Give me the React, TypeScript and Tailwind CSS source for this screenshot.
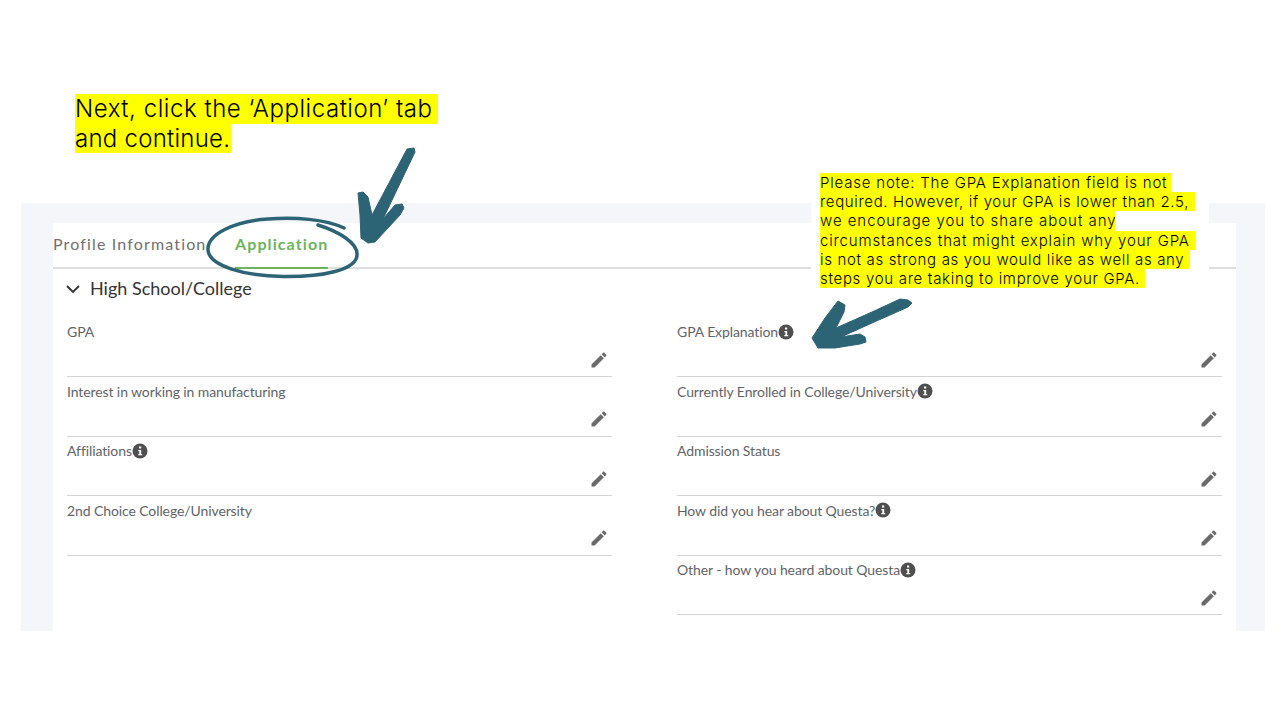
const noteLines = [
  { text: 'Please note: The GPA Explanation field is not', cls: 'w-[351px] tracking-[0.8px]' },
  { text: 'required. However, if your GPA is lower than 2.5,', cls: 'w-[375px] tracking-[0.66px]' },
  { text: 'we encourage you to share about any', cls: 'w-[295px] tracking-[0.95px]' },
  { text: 'circumstances that might explain why your GPA', cls: 'w-[376px] tracking-[0.86px]' },
  { text: 'is not as strong as you would like as well as any', cls: 'w-[370px] tracking-[0.66px]' },
  { text: 'steps you are taking to improve your GPA.', cls: 'w-[325px] tracking-[0.7px]' },
]

const leftFields = [
  { label: 'GPA' },
  { label: 'Interest in working in manufacturing' },
  { label: 'Affiliations', info: true },
  { label: '2nd Choice College/University' },
]

const rightFields = [
  { label: 'GPA Explanation', info: true },
  { label: 'Currently Enrolled in College/University', info: true },
  { label: 'Admission Status' },
  { label: 'How did you hear about Questa?', info: true },
  { label: 'Other - how you heard about Questa', info: true },
]

function InfoIcon() {
  return (
    <svg width="16" height="16" viewBox="0 0 16 16" className="shrink-0">
      <circle cx="8" cy="8" r="7.5" fill="#4f4f4f" />
      <rect x="7" y="3.5" width="2.2" height="2" fill="#fff" />
      <path d="M6.3 7h2.9v4h1v1.3H6.3V11h1V8.3h-1z" fill="#fff" />
    </svg>
  )
}

function PencilIcon() {
  return (
    <svg width="20" height="20" viewBox="0 0 24 24" fill="#6a6a6a">
      <path d="M3 17.25V21h3.75L17.81 9.94l-3.75-3.75L3 17.25zM20.71 7.04c.39-.39.39-1.02 0-1.41l-2.34-2.34c-.39-.39-1.02-.39-1.41 0l-1.83 1.83 3.75 3.75 1.83-1.83z" />
    </svg>
  )
}

function Field({ label, info }: { label: string; info?: boolean }) {
  return (
    <div className="h-[59.5px] border-b-[1.5px] border-[#d4d4d4] flex flex-col">
      <div className="flex items-center h-[16px] mt-[6px] text-[14px] tracking-[-0.1px] text-[#5f6368]">
        <span>{label}</span>
        {info && <InfoIcon />}
      </div>
      <div className="flex justify-end pr-[3px] mt-[10px]">
        <PencilIcon />
      </div>
    </div>
  )
}

export default function App() {
  return (
    <div className="relative h-[720px] overflow-hidden bg-white pt-[203px] pl-[21px] font-['Lato',sans-serif]">
      {/* Page behind the annotations */}
      <div className="w-[1244px] h-[428px] bg-[#f4f6fa] pl-[32px] pr-[29px] pt-[20px]">
        <div className="h-full bg-white">
          <div className="flex h-[45.5px] border-b-2 border-[#dedede]">
            <div className="w-[152px] pt-[11px] text-[16px] tracking-[1.15px] text-[#6f6f6f] leading-[20px] whitespace-nowrap">
              Profile Information
            </div>
            <div className="ml-[30px] pt-[11px] text-[16px] font-bold tracking-[1.1px] text-[#6cb35c] leading-[20px] h-[45.5px] border-b-2 border-[#6cb35c]">
              Application
            </div>
          </div>
          <div className="flex items-center h-[40px] pl-[12px] gap-[9px] text-[18px] text-[#333]">
            <svg width="16" height="16" viewBox="0 0 16 16" fill="none" stroke="#333" strokeWidth="1.8">
              <path d="M2 5l6 6 6-6" />
            </svg>
            <span>High School/College</span>
          </div>
          <div className="grid grid-cols-2 gap-x-[65px] px-[14px] pt-[9px]">
            <div>
              {leftFields.map((f) => (
                <Field key={f.label} {...f} />
              ))}
            </div>
            <div>
              {rightFields.map((f) => (
                <Field key={f.label} {...f} />
              ))}
            </div>
          </div>
        </div>
      </div>

      {/* Annotations */}
      <div className="absolute left-[75px] top-[94px] font-['Inter',sans-serif] font-light text-[24px] leading-[29px] text-black whitespace-nowrap">
        <div className="bg-[#ffff00] w-[363px] h-[29.5px] tracking-[0.55px]">Next, click the ‘Application’ tab</div>
        <div className="bg-[#ffff00] w-[156px] tracking-[0.25px]">and continue.</div>
      </div>

      <div className="absolute left-[811px] top-[170px] w-[398px] h-[100px] bg-white" />
      <div className="absolute left-[820px] top-[173px] font-['Inter',sans-serif] font-light text-[15px] leading-[19.2px] text-black">
        {noteLines.map((line) => (
          <div key={line.text} className={`bg-[#ffff00] whitespace-nowrap ${line.cls}`}>
            {line.text}
          </div>
        ))}
      </div>

      <svg className="absolute left-0 top-0 pointer-events-none" width="1280" height="720" viewBox="0 0 1280 720">
        <path
          fill="#2d6475"
          stroke="#2d6475"
          strokeWidth="1"
          strokeLinejoin="round"
          d="M407 149L414 148L415 152L383 219L395 205L402 204L404 208L400 215L375 242L368 243L361 238L360 215L358 193L363 192L368 197L372 215Z"
        />
        <path
          fill="#2d6475"
          stroke="#2d6475"
          strokeWidth="1"
          strokeLinejoin="round"
          d="M900 299L908 300L912 303L908 307L872 323L841 337L860 334L865 337L866 342L860 344L835 348L818 348L812 338L825 318L838 301L845 305L844 312L836 328L872 312Z"
        />
        <path
          fill="none"
          stroke="#2d6475"
          strokeWidth="3.5"
          strokeLinecap="round"
          d="M344 228C325 219 295 217 268 219C235 221 207 234 208 250C209 266 245 276 283 276.5C322 277 358 270 357 254C357 243 340 232 318 225"
        />
      </svg>
    </div>
  )
}
